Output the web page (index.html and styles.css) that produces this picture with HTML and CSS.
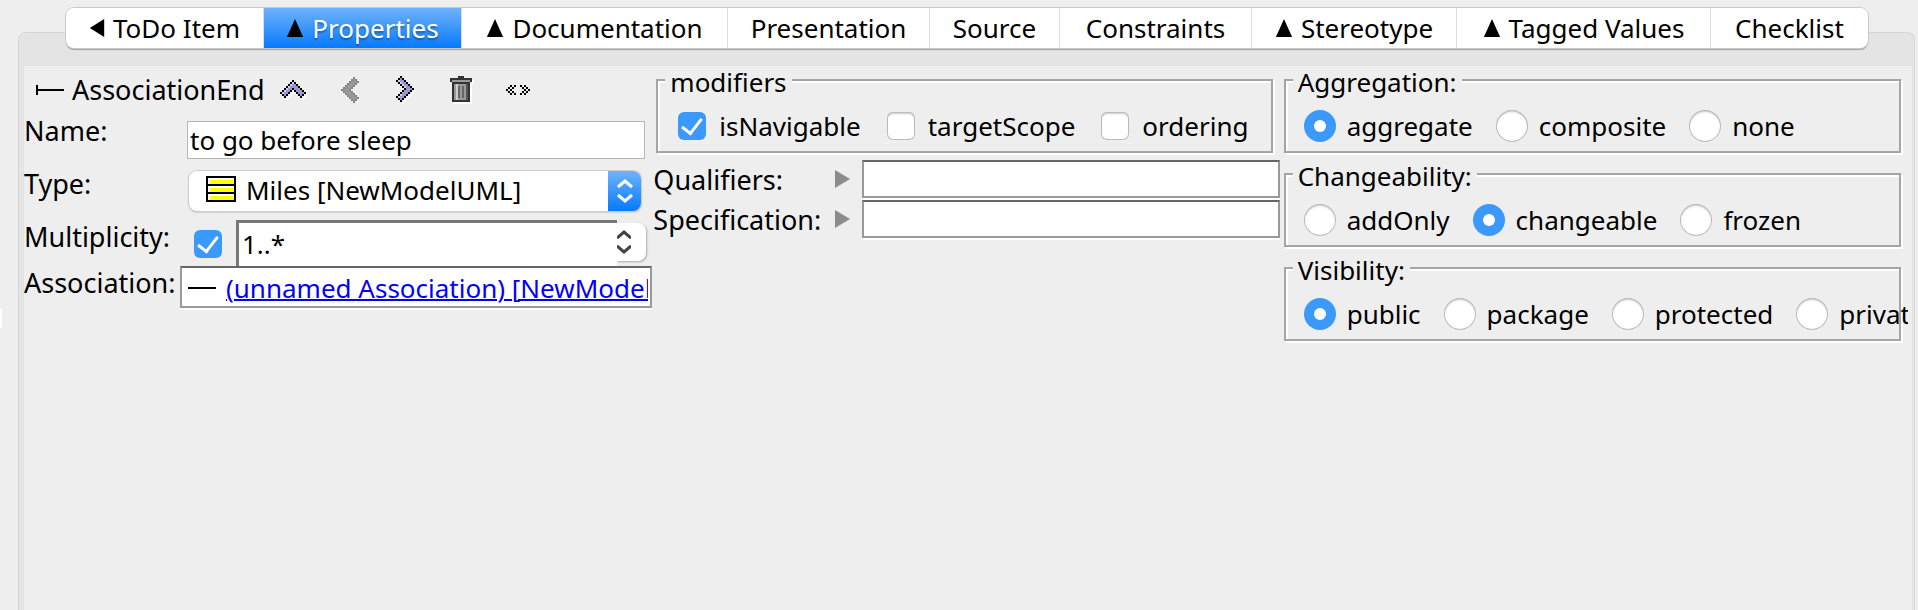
FILE: index.html
```html
<!DOCTYPE html>
<html lang="en">
<head>
<meta charset="utf-8">
<title>AssociationEnd properties</title>
<link rel="stylesheet" href="styles.css">
</head>
<body>
<div class="window">
  <nav class="tabs" role="tablist">
    <button class="tab" role="tab"><svg class="tab-mark" viewBox="0 0 16 20"><path d="M0 10 16 0V20Z"/></svg>ToDo Item</button>
    <button class="tab active" role="tab" aria-selected="true"><svg class="tab-mark up" viewBox="0 0 18 20"><path d="M9 0 18 20H0Z"/></svg>Properties</button>
    <button class="tab" role="tab"><svg class="tab-mark up" viewBox="0 0 18 20"><path d="M9 0 18 20H0Z"/></svg>Documentation</button>
    <button class="tab" role="tab">Presentation</button>
    <button class="tab" role="tab">Source</button>
    <button class="tab" role="tab">Constraints</button>
    <button class="tab" role="tab"><svg class="tab-mark up" viewBox="0 0 18 20"><path d="M9 0 18 20H0Z"/></svg>Stereotype</button>
    <button class="tab" role="tab"><svg class="tab-mark up" viewBox="0 0 18 20"><path d="M9 0 18 20H0Z"/></svg>Tagged Values</button>
    <button class="tab" role="tab">Checklist</button>
  </nav>
  <main class="panel">
    <div class="sheet">
      <section class="column">
        <div class="toolbar">
          <svg class="end-icon" viewBox="0 0 28 10"><path d="M1 0V10M1 5H28" stroke="#000" stroke-width="2"/></svg>
          <span class="title">AssociationEnd</span>
          <button class="tool" aria-label="Up">
            <svg class="pixels" width="28" height="20" viewBox="0 0 14 10">
              <path stroke="#fff" d="M3 9.5h1M4 8.5h1M5 7.5h1M6 6.5h1M7 5.5h1M9 8.5h1M10 9.5h2M12 8.5h1M13 7.5h1"/>
              <path stroke="#9999cc" d="M6 1.5h1M5 2.5h3M4 3.5h5M3 4.5h3M7 4.5h3M2 5.5h3M8 5.5h3M1 6.5h3M9 6.5h3M2 7.5h1M10 7.5h1"/>
              <path stroke="#ccccff" d="M6 1.5h1M5 2.5h1M4 3.5h1M3 4.5h1M2 5.5h1M1 6.5h1"/>
              <path stroke="#000" d="M6 .5h1M5 1.5h1M7 1.5h1M4 2.5h1M8 2.5h1M3 3.5h1M9 3.5h1M2 4.5h1M6 4.5h1M10 4.5h1M1 5.5h1M5 5.5h1M7 5.5h1M11 5.5h1M0 6.5h1M4 6.5h1M8 6.5h1M12 6.5h1M1 7.5h1M3 7.5h1M9 7.5h1M11 7.5h1M2 8.5h1M10 8.5h1"/>
            </svg>
          </button>
          <button class="tool" aria-label="Back">
            <svg class="pixels" width="18" height="26" viewBox="0 0 9 13">
              <g transform="matrix(0 1 1 0 0 0)">
                <path stroke="#999" d="M6 1.5h1M5 2.5h3M4 3.5h5M3 4.5h3M7 4.5h3M2 5.5h3M8 5.5h3M1 6.5h3M9 6.5h3M2 7.5h1M10 7.5h1"/>
                <path stroke="#848484" d="M6 .5h1M5 1.5h1M7 1.5h1M4 2.5h1M8 2.5h1M3 3.5h1M9 3.5h1M2 4.5h1M6 4.5h1M10 4.5h1M1 5.5h1M5 5.5h1M7 5.5h1M11 5.5h1M0 6.5h1M4 6.5h1M8 6.5h1M12 6.5h1M1 7.5h1M3 7.5h1M9 7.5h1M11 7.5h1M2 8.5h1M10 8.5h1"/>
              </g>
            </svg>
          </button>
          <button class="tool" aria-label="Forward">
            <svg class="pixels" width="20" height="28" viewBox="0 0 10 14">
              <path stroke="#fff" d="M9 7.5h1M8 8.5h1M7 9.5h1M6 10.5h1M5 11.5h1M4 12.5h1M3 13.5h1"/>
              <g transform="matrix(0 1 -1 0 9 0)">
                <path stroke="#9999cc" d="M6 1.5h1M5 2.5h3M4 3.5h5M3 4.5h3M7 4.5h3M2 5.5h3M8 5.5h3M1 6.5h3M9 6.5h3M2 7.5h1M10 7.5h1"/>
                <path stroke="#ccccff" d="M2 7.5h1M3 6.5h1M4 5.5h1M5 4.5h1M9 6.5h1M10 7.5h1"/>
                <path stroke="#000" d="M6 .5h1M5 1.5h1M7 1.5h1M4 2.5h1M8 2.5h1M3 3.5h1M9 3.5h1M2 4.5h1M6 4.5h1M10 4.5h1M1 5.5h1M5 5.5h1M7 5.5h1M11 5.5h1M0 6.5h1M4 6.5h1M8 6.5h1M12 6.5h1M1 7.5h1M3 7.5h1M9 7.5h1M11 7.5h1M2 8.5h1M10 8.5h1"/>
              </g>
            </svg>
          </button>
          <button class="tool" aria-label="Delete"><svg class="pixels" width="24" height="28" viewBox="0 0 24 28"><path d="M4 8H22V28H4ZM22 4H24V8H22Z" fill="#fff"/><path d="M8 0H14V2H22V6H20V26H2V6H0V2H8Z" fill="#333"/><path d="M2 4H20V6H2Z" fill="#999"/><path d="M4 8H18V24H4Z" fill="#999"/><path d="M6 8H8V24H6Z" fill="#ccc"/><path d="M9 10V22M13 10V22" stroke="#666" stroke-width="2"/><path d="M17 8V24" stroke="#555" stroke-width="2"/></svg></button>
          <button class="tool" aria-label="Add stereotype"><svg class="pixels" width="24" height="10" viewBox="0 0 12 5"><path stroke="#000" d="M2 .5h1M4 .5h1M1 1.5h1M3 1.5h1M0 2.5h1M2 2.5h1M1 3.5h1M3 3.5h1M2 4.5h1M4 4.5h1M7 .5h1M9 .5h1M8 1.5h1M10 1.5h1M9 2.5h1M11 2.5h1M8 3.5h1M10 3.5h1M7 4.5h1M9 4.5h1"/></svg></button>
        </div>
        <div class="form">
          <label for="name">Name:</label>
          <input id="name" class="text-field" type="text" value="to go before sleep">

          <label for="type">Type:</label>
          <div class="combo">
            <svg class="class-icon" viewBox="0 0 30 26"><path d="M0 0H30V26H0Z" fill="#000"/><path d="M2 2H28V8H2ZM2 10H28V16H2ZM2 18H28V24H2Z" fill="#fff"/><path d="M4 4H28V8H4ZM4 12H28V16H4ZM4 20H28V24H4Z" fill="#ff0"/></svg>
            <select id="type"><option>Miles [NewModelUML]</option></select>
            <span class="combo-arrows"><svg width="16" height="24" viewBox="0 0 16 24"><path d="M1 8 8 2 15 8M1 16 8 22 15 16" fill="none" stroke="#fff" stroke-width="3"/></svg></span>
          </div>

          <label for="mult">Multiplicity:</label>
          <div class="multiplicity">
            <input class="check" type="checkbox" aria-label="Use multiplicity" checked>
            <input id="mult" class="mult-field" type="text" value="1..*">
            <button class="stepper" aria-label="Choose multiplicity"><svg width="14" height="24" viewBox="0 0 14 24"><path d="M0 8 7 2 14 8M0 16 7 22 14 16" fill="none" stroke="#444" stroke-width="3"/></svg></button>
          </div>

          <span class="label">Association:</span>
          <div class="list-box">
            <svg class="dash" viewBox="0 0 28 2"><path d="M0 0H28V2H0Z"/></svg>
            <a href="#association">(unnamed Association) [NewModelUML]</a>
          </div>
        </div>
      </section>

      <section class="column middle">
        <fieldset class="group">
          <legend>modifiers</legend>
          <div class="options">
            <label class="option"><input class="check" type="checkbox" checked>isNavigable</label>
            <label class="option"><input class="check" type="checkbox">targetScope</label>
            <label class="option"><input class="check" type="checkbox">ordering</label>
          </div>
        </fieldset>
        <div class="lists">
          <label for="qualifiers">Qualifiers:</label>
          <svg class="expand" viewBox="0 0 15 18"><path d="M0 0 15 9 0 18Z" fill="#8c8c8c"/></svg>
          <input id="qualifiers" class="empty-box" type="text">
          <label for="specification">Specification:</label>
          <svg class="expand" viewBox="0 0 15 18"><path d="M0 0 15 9 0 18Z" fill="#8c8c8c"/></svg>
          <input id="specification" class="empty-box" type="text">
        </div>
      </section>

      <section class="column right">
        <fieldset class="group">
          <legend>Aggregation:</legend>
          <div class="options">
            <label class="option"><input class="radio" type="radio" name="aggregation" checked>aggregate</label>
            <label class="option"><input class="radio" type="radio" name="aggregation">composite</label>
            <label class="option"><input class="radio" type="radio" name="aggregation">none</label>
          </div>
        </fieldset>
        <fieldset class="group">
          <legend>Changeability:</legend>
          <div class="options">
            <label class="option"><input class="radio" type="radio" name="changeability">addOnly</label>
            <label class="option"><input class="radio" type="radio" name="changeability" checked>changeable</label>
            <label class="option"><input class="radio" type="radio" name="changeability">frozen</label>
          </div>
        </fieldset>
        <fieldset class="group">
          <legend>Visibility:</legend>
          <div class="options">
            <label class="option"><input class="radio" type="radio" name="visibility" checked>public</label>
            <label class="option"><input class="radio" type="radio" name="visibility">package</label>
            <label class="option"><input class="radio" type="radio" name="visibility">protected</label>
            <label class="option"><input class="radio" type="radio" name="visibility">private</label>
          </div>
        </fieldset>
      </section>
    </div>
  </main>
  <span class="splitter-knob"></span>
</div>
</body>
</html>
```

FILE: styles.css
```css
* { box-sizing: border-box; }

body {
  margin: 0;
  background: #eee;
  color: #000;
  font: 26px/30px "Noto Sans", "Open Sans", sans-serif;
}

button, input, select {
  margin: 0;
  padding: 0;
  border: 0;
  border-radius: 0;
  background: none;
  color: inherit;
  font: inherit;
}

svg { flex: none; display: block; }
.pixels { shape-rendering: crispEdges; }

.window {
  position: relative;
  display: flex;
  flex-direction: column;
  min-height: 100vh;
  padding: 8px 3px 0 18px;
}

/* Tabs */
.tabs {
  position: relative;
  z-index: 1;
  display: grid;
  grid-template-columns: 198fr 198fr 266fr 202fr 130fr 192fr 205fr 254fr 157fr;
  height: 40px;
  margin: 0 47px 0 48px;
  border-radius: 8px;
  box-shadow: 0 0 0 1px #c9c9c9, 0 2px 1px #a0a0a0;
}

.tab {
  display: flex;
  align-items: center;
  justify-content: center;
  gap: 8px;
  border-right: 1px solid #dcdcdc;
  background: #fff;
  white-space: nowrap;
}

.tab:first-child { border-radius: 8px 0 0 8px; }
.tab:last-child { border-right: 0; border-radius: 0 8px 8px 0; }

.tab.active {
  background: linear-gradient(#6eb3fa, #067aff);
  color: #fff;
  text-shadow: 0 2px 2px rgba(0, 0, 0, .35);
}

.tab-mark { width: 16px; height: 18px; fill: #000; }
.tab-mark.up { width: 18px; }

/* Panel */
.panel {
  flex: 1;
  display: grid;
  margin-top: -16px;
  padding: 33px 2px 0 5px;
  border: 1px solid #d6d6d6;
  border-bottom: 0;
  border-radius: 8px 8px 0 0;
  background: #e4e4e4;
}

.sheet {
  display: grid;
  grid-template-columns: repeat(3, minmax(0, 1fr));
  background: #eee;
}

/* Left column */
.toolbar {
  display: flex;
  align-items: center;
  height: 48px;
  padding-left: 12px;
}

.end-icon { width: 28px; height: 10px; }
.title { width: 202px; padding-left: 8px; font-size: 27px; white-space: nowrap; }

.tool {
  display: grid;
  place-items: center;
  width: 56px;
  height: 32px;
}

.form {
  display: grid;
  grid-template-columns: 156px minmax(0, 1fr);
  grid-template-rows: 53px 53px 46px auto;
}

.form label, .label, .lists label {
  padding-top: 2px;
  font-size: 27px;
  white-space: nowrap;
}

.text-field {
  height: 38px;
  margin: 7px 8px 0 7px;
  padding: 0 2px;
  border: 1px solid #b5b5b5;
  background: #fff;
}

.combo {
  position: relative;
  height: 40px;
  margin: 4px 12px 0 9px;
  border-radius: 8px;
  background: #fff;
  box-shadow: 0 0 0 1px #ccc, 0 1px 2px #999;
}
.combo select {
  width: 100%;
  height: 38px;
  padding: 0 44px 0 57px;
  appearance: none;
}
.class-icon { position: absolute; top: 5px; left: 17px; width: 30px; height: 26px; }
.combo-arrows {
  position: absolute;
  top: 0;
  right: 0;
  display: grid;
  place-items: center;
  width: 33px;
  height: 40px;
  border-radius: 0 8px 8px 0;
  background: linear-gradient(#6eb3fa, #067aff);
  pointer-events: none;
}

.multiplicity { display: flex; padding: 0 7px 0 14px; }
.multiplicity .check { margin: 10px 14px 0 0; }
.mult-field {
  flex: 1;
  min-width: 0;
  height: 46px;
  padding: 0 5px 2px 3px;
  border-top: 3px solid #777;
  border-left: 3px solid #777;
  background: #fff;
}
.stepper {
  display: grid;
  place-items: center start;
  width: 29px;
  height: 38px;
  margin-top: 3px;
  border-radius: 0 8px 8px 0;
  background: #fff;
  box-shadow: 1px 1px 2px #aaa;
}

.list-box, .empty-box {
  border: 2px solid #999;
  border-top-color: #666;
  background: #fff;
  box-shadow: 0 2px 0 #fff;
}
.list-box {
  display: flex;
  align-items: center;
  gap: 10px;
  height: 42px;
  margin-right: 1px;
  padding: 1px 2px 0 6px;
}
.list-box a {
  flex: 1;
  min-width: 0;
  overflow: hidden;
  color: #00f;
  line-height: 36px;
  text-decoration-thickness: 2px;
  white-space: nowrap;
}
.dash { width: 28px; height: 2px; }

/* Groups */
.middle .group { margin: 0 10px 0 3px; }

.right {
  display: flex;
  flex-direction: column;
  gap: 7px;
  margin-right: 4px;
  padding: 0 7px 0 1px;
  overflow-x: clip;
}

.group {
  min-width: 0;
  margin: 0;
  padding: 16px 10px 9px;
  border: 2px solid #a5a5a5;
  box-shadow: 2px 2px 0 #fff, inset 2px 2px 0 #fff;
}
.right .group { padding: 16px 18px 9px; }

.group legend {
  height: 28px;
  padding: 0 5px;
  background: #eee;
  line-height: 32px;
}
.middle legend { margin-left: -3px; }
.right legend { margin-left: -11px; }

.options {
  display: flex;
  gap: 23px;
  height: 32px;
}
.middle .options { gap: 26px; padding-left: 10px; }

.option {
  display: flex;
  flex: none;
  align-items: center;
  gap: 11px;
}
.middle .option { gap: 13px; }

.check, .radio {
  flex: none;
  display: grid;
  place-items: center;
  appearance: none;
  background: #fff;
  box-shadow: inset 0 0 0 1px #bbb, inset 0 2px 2px #ccc;
}
.check { width: 28px; height: 28px; border-radius: 6px; }
.radio { width: 32px; height: 32px; border-radius: 50%; }
.check:checked, .radio:checked { background: #3b99fc; box-shadow: none; }
.check:checked::after {
  content: "";
  width: 9px;
  height: 17px;
  margin-bottom: 4px;
  border: solid #fff;
  border-width: 0 3px 3px 0;
  transform: rotate(38deg);
}
.radio:checked::after {
  content: "";
  width: 12px;
  height: 12px;
  border-radius: 50%;
  background: #fff;
}

/* Lists */
.lists {
  display: grid;
  grid-template-columns: 182px 27px minmax(0, 1fr);
  row-gap: 2px;
  align-items: center;
  margin-top: 7px;
  padding-right: 3px;
}
.expand { width: 15px; height: 18px; }
.empty-box { width: 100%; height: 38px; }

.splitter-knob {
  position: absolute;
  top: 309px;
  left: 0;
  width: 2px;
  height: 19px;
  background: #fff;
}
```
